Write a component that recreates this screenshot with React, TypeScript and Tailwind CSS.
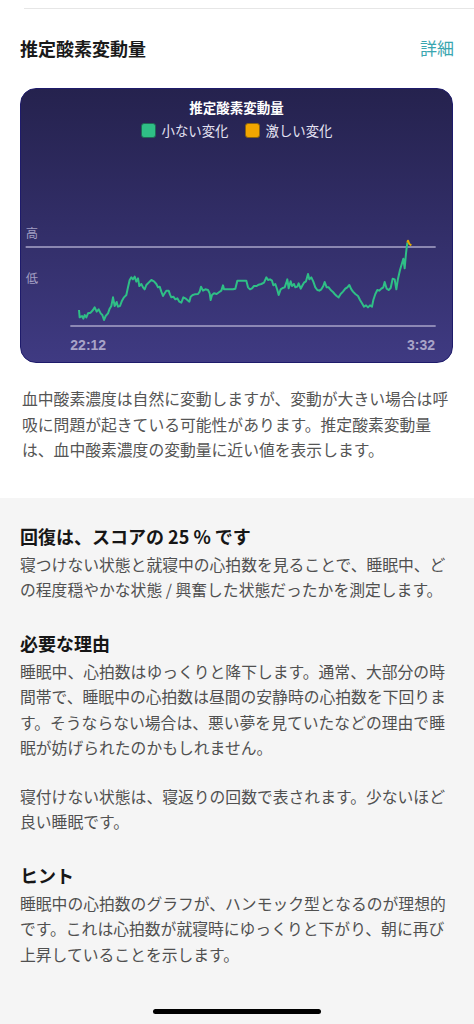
import React from 'react';

const JP = "font-['Noto_Sans_CJK_JP','Noto_Sans',sans-serif]";

// 推定酸素変動量のグラフ（座標は 3 倍スケール）
const LINE = [
  [183, 330], [185, 352], [192, 348], [196, 356], [200, 345], [205, 352], [210, 340], [218, 338], [225, 330], [230, 322],
  [236, 335], [242, 328], [248, 340], [253, 345], [258, 360], [263, 348], [270, 340], [275, 326], [280, 318], [285, 292],
  [290, 318], [296, 306], [300, 320], [306, 318], [312, 302], [318, 292], [325, 285], [330, 262], [335, 240], [340, 232],
  [345, 238], [350, 230], [355, 245], [360, 235], [364, 258], [370, 252], [375, 262], [380, 268], [385, 255], [392, 248],
  [400, 240], [408, 244], [415, 252], [420, 262], [425, 260], [430, 275], [435, 288], [440, 280], [445, 272], [452, 272],
  [456, 284], [460, 292], [466, 290], [472, 298], [478, 295], [484, 305], [490, 308], [496, 292], [502, 295], [508, 300],
  [514, 305], [518, 290], [524, 285], [530, 283], [540, 282], [545, 275], [549, 260], [555, 272], [562, 268], [570, 270],
  [575, 280], [578, 300], [582, 285], [588, 280], [596, 282], [604, 276], [610, 272], [615, 256], [618, 268], [630, 268],
  [645, 268], [652, 266], [658, 242], [670, 242], [685, 242], [690, 262], [696, 268], [702, 265], [708, 258], [716, 258],
  [722, 254], [730, 252], [738, 248], [745, 232], [750, 240], [756, 238], [762, 242], [766, 256], [772, 252], [778, 270],
  [782, 285], [788, 268], [794, 264], [800, 262], [805, 248], [808, 238], [812, 265], [818, 244], [822, 258], [828, 252],
  [832, 262], [838, 260], [842, 250], [848, 266], [854, 255], [858, 248], [864, 244], [870, 222], [874, 238], [880, 232],
  [886, 245], [892, 262], [898, 270], [904, 272], [910, 268], [916, 258], [920, 246], [926, 262], [932, 262], [938, 270],
  [944, 275], [950, 282], [956, 288], [962, 292], [968, 282], [975, 275], [982, 266], [988, 262], [994, 255], [1000, 268],
  [1005, 275], [1012, 282], [1020, 288], [1026, 300], [1032, 310], [1038, 320], [1044, 316], [1050, 322], [1056, 316],
  [1062, 320], [1066, 300], [1072, 282], [1078, 270], [1084, 272], [1090, 266], [1096, 262], [1100, 246], [1106, 266],
  [1112, 270], [1118, 264], [1124, 236], [1130, 238], [1135, 268], [1140, 236], [1146, 210], [1152, 190], [1156, 176],
  [1160, 205], [1164, 160], [1168, 128],
];
const PEAK = [[1168, 128], [1170, 122], [1174, 132], [1180, 136]];

const pts = (list: number[][]) => list.map(([x, y]) => `${x},${y}`).join(' ');

function OxygenChart() {
  return (
    <div className="mt-[27px] ml-5 mr-[21px] rounded-2xl border border-[#1e1b6b] bg-linear-to-b from-[#25224e] to-[#3f3a82] overflow-hidden">
      <div className="pt-[9px] flex flex-col items-center">
        <div className="text-[13.5px] leading-[18px] font-bold text-white">推定酸素変動量</div>
        <div className="mt-[5px] flex items-center h-[18px] text-[13.4px] text-[#e4e2f2]">
          <span className="w-[15px] h-[15px] rounded-[3px] bg-[#2fbf86] border border-[#1f6b55]" />
          <span className="ml-[6px]">小ない変化</span>
          <span className="ml-4 w-[15px] h-[15px] rounded-[3px] bg-[#f2a600] border border-[#8a6410]" />
          <span className="ml-[6px]">激しい変化</span>
        </div>
      </div>
      <svg width="431" height="223" viewBox="9 -183 1293 669" className="block">
        <text x="23" y="113" fontSize="37" fill="#a29ec2" className={JP}>高</text>
        <line x1="23" y1="141" x2="1253" y2="141" stroke="#a9a5c8" strokeWidth="4.5" />
        <text x="23" y="248" fontSize="37" fill="#a29ec2" className={JP}>低</text>
        <line x1="157" y1="378" x2="1253" y2="378" stroke="#a9a5c8" strokeWidth="4.5" />
        <polyline points={pts(LINE)} fill="none" stroke="#2fbf86" strokeWidth="6" strokeLinejoin="round" />
        <polyline points={pts(PEAK)} fill="none" stroke="#e0a800" strokeWidth="6" strokeLinejoin="round" />
        <text x="157" y="451" fontSize="42" fontWeight="bold" fill="#a8a4c8" className="font-['Liberation_Sans',sans-serif]">22:12</text>
        <text x="1251" y="451" fontSize="42" fontWeight="bold" fill="#a8a4c8" textAnchor="end" className="font-['Liberation_Sans',sans-serif]">3:32</text>
      </svg>
    </div>
  );
}

function Section({ title, children, first }: { title: string; children: React.ReactNode; first?: boolean }) {
  return (
    <div className={first ? '' : 'mt-[26px]'}>
      <h3 className="text-[18px] leading-[28px] font-bold text-[#161616]">{title}</h3>
      <div className="mt-[2px] text-[15.8px] leading-[25.5px] text-[#505050]">{children}</div>
    </div>
  );
}

export default function App() {
  return (
    <div className={`w-[474px] min-h-[1024px] bg-white flex flex-col ${JP}`}>
      <div className="mt-2 ml-6 h-px bg-[#e6e6e6]" />

      <div className="mt-[26px] px-5 h-[26px] flex items-center justify-between">
        <h2 className="text-[18px] font-semibold text-[#1a1a1a]">推定酸素変動量</h2>
        <span className="text-[17px] text-[#3aa6b0]">詳細</span>
      </div>

      <OxygenChart />

      <p className="mt-[23px] mb-[35px] px-[22px] text-[15.8px] leading-[25.5px] text-[#555]">
        血中酸素濃度は自然に変動しますが、変動が大きい場合は呼吸に問題が起きている可能性があります。推定酸素変動量は、血中酸素濃度の変動量に近い値を表示します。
      </p>

      <div className="flex-1 bg-[#f5f5f5] px-5 pt-6 pb-[10px] flex flex-col">
        <Section title="回復は、スコアの 25 % です" first>
          <p>寝つけない状態と就寝中の心拍数を見ることで、睡眠中、どの程度穏やかな状態 / 興奮した状態だったかを測定します。</p>
        </Section>
        <Section title="必要な理由">
          <p>睡眠中、心拍数はゆっくりと降下します。通常、大部分の時間帯で、睡眠中の心拍数は昼間の安静時の心拍数を下回ります。そうならない場合は、悪い夢を見ていたなどの理由で睡眠が妨げられたのかもしれません。</p>
          <p className="mt-[23px]">寝付けない状態は、寝返りの回数で表されます。少ないほど良い睡眠です。</p>
        </Section>
        <Section title="ヒント">
          <p>睡眠中の心拍数のグラフが、ハンモック型となるのが理想的です。これは心拍数が就寝時にゆっくりと下がり、朝に再び上昇していることを示します。</p>
        </Section>
        <div className="mt-auto pt-[42px]">
          <div className="mx-auto w-[168px] h-[5px] rounded-full bg-black" />
        </div>
      </div>
    </div>
  );
}
